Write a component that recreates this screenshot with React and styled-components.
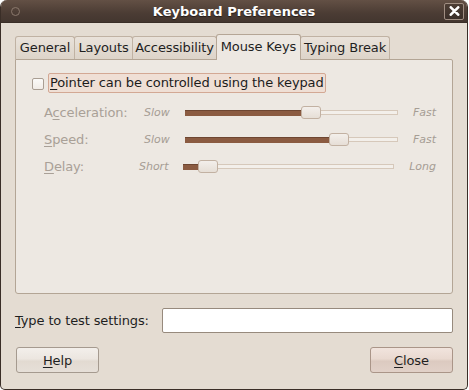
import React from "react"
import styled, { createGlobalStyle, css } from "styled-components"

const GlobalStyle = createGlobalStyle`
  html, body {
    margin: 0;
    padding: 0;
    background: #ffffff;
  }
  body {
    font-family: "DejaVu Sans", "Liberation Sans", sans-serif;
    font-size: 13px;
    letter-spacing: -0.12px;
    color: #1a1a1a;
  }
`

const Window = styled.div`
  width: 468px;
  height: 390px;
  box-sizing: border-box;
  display: flex;
  flex-direction: column;
  background: #e4dcd2;
  border: 1px solid #3a2e27;
  border-top: none;
  border-radius: 7px 7px 5px 5px;
  overflow: hidden;
`

const TitleBar = styled.div`
  height: 22px;
  flex: none;
  display: grid;
  grid-template-columns: 30px 1fr 30px;
  align-items: center;
  background: linear-gradient(#635045, #4b3c34 60%, #43362f);
  border-bottom: 1px solid #3a2e27;
`

const MenuDot = styled.div`
  width: 7px;
  height: 7px;
  margin-left: 10px;
  border-radius: 50%;
  border: 1px solid #8a786c;
`

const Title = styled.div`
  text-align: center;
  color: #ffffff;
  font-weight: bold;
  font-size: 13px;
  letter-spacing: 0;
  text-shadow: 0 1px 1px rgba(0, 0, 0, 0.55);
`

const CloseBox = styled.div`
  justify-self: end;
  margin-right: 3px;
  width: 20px;
  height: 17px;
  box-sizing: border-box;
  display: flex;
  align-items: center;
  justify-content: center;
  border: 1px solid #a08e82;
  border-radius: 2px;
  background: linear-gradient(#4d3e35, #3b2f29);
`

const Body = styled.div`
  flex: 1;
  display: flex;
  flex-direction: column;
  padding: 10px 14px 15px 14px;
`

const TabRow = styled.div`
  display: flex;
  align-items: flex-end;
  height: 26px;
  position: relative;
  z-index: 1;
`

const Tab = styled.div`
  box-sizing: border-box;
  width: ${(p) => p.$w}px;
  margin-left: -1px;
  &:first-child { margin-left: 0; }
  text-align: center;
  border: 1px solid #c0b2a3;
  border-bottom: none;
  border-radius: 3px 3px 0 0;
  height: 23px;
  line-height: 22px;
  background: linear-gradient(#e9e2da, #ddd4c9);
  color: #1f1f1f;
  ${(p) =>
    p.$active &&
    css`
      height: 26px;
      line-height: 23px;
      margin-bottom: -1px;
      border-color: #b5a696;
      background: #ede8e2;
      position: relative;
      z-index: 2;
    `}
`

const Panel = styled.div`
  height: 235px;
  box-sizing: border-box;
  border: 1px solid #b3a595;
  border-radius: 0 2px 3px 3px;
  background: #ede8e2;
  padding: 13px 16px 0 16px;
`

const CheckRow = styled.div`
  display: flex;
  align-items: center;
  height: 20px;
  gap: 4px;
`

const Checkbox = styled.div`
  width: 12px;
  height: 12px;
  box-sizing: border-box;
  border: 1px solid #a99e93;
  border-radius: 2px;
  background: linear-gradient(#fbfaf8, #f1ece7);
  margin-top: 1px;
`

const Prelight = styled.div`
  height: 20px;
  box-sizing: border-box;
  padding: 0 1px 0 1px;
  line-height: 18px;
  border: 1px solid #d3a894;
  border-radius: 2px;
  background: #efdfd5;
  color: #1c1c1c;
`

const Mn = styled.span`
  text-decoration: underline;
  text-underline-offset: 2px;
  text-decoration-thickness: 1px;
`

const Rows = styled.div`
  margin-top: 6px;
  margin-left: 12px;
`

const SliderRow = styled.div`
  display: flex;
  align-items: center;
  height: 27px;
`

const RowLabel = styled.div`
  width: 96px;
  color: #a9a097;
`

const EndWord = styled.div`
  font-size: 11px;
  font-style: italic;
  letter-spacing: 0;
  color: #a69d94;
  ${(p) =>
    p.$left
      ? css`
          width: 31px;
          text-align: right;
          margin-right: 15px;
        `
      : css`
          margin-left: 15px;
        `}
`

const Track = styled.div`
  position: relative;
  width: 215px;
  height: 13px;
`

const Trough = styled.div`
  position: absolute;
  left: 0;
  right: 0;
  top: 4px;
  height: 5px;
  box-sizing: border-box;
  border: 1px solid #d6c8ba;
  background: #f3efea;
`

const Fill = styled.div`
  position: absolute;
  left: 0;
  top: 4px;
  height: 6px;
  box-sizing: border-box;
  border-top: 1px solid #6e4631;
  background: #8b5b41;
`

const Knob = styled.div`
  position: absolute;
  top: 0;
  width: 20px;
  height: 13px;
  box-sizing: border-box;
  border: 1px solid #c2b1a2;
  border-radius: 3px;
  background: linear-gradient(#f3efeb, #e6ded6);
`

const TestRow = styled.div`
  display: flex;
  align-items: center;
  margin-top: 14px;
  height: 25px;
`

const TestLabel = styled.div`
  width: 147px;
  color: #1f1f1f;
`

const Entry = styled.div`
  flex: 1;
  height: 25px;
  box-sizing: border-box;
  border: 1px solid #978a7d;
  border-radius: 2px;
  background: #ffffff;
`

const ButtonRow = styled.div`
  display: flex;
  justify-content: space-between;
  margin-top: 14px;
  padding-left: 1px;
`

const Button = styled.div`
  width: 83px;
  height: 26px;
  box-sizing: border-box;
  display: flex;
  align-items: center;
  justify-content: center;
  border: 1px solid #a59a8f;
  border-radius: 3px;
  color: #1f1f1f;
  background: linear-gradient(#f3efeb, #ece6e0 45%, #e2dad1 55%, #e6dfd8);
  ${(p) =>
    p.$default &&
    css`
      border-color: #aa9588;
      background: linear-gradient(#f1e4dd, #e9d9d0 45%, #dccac0 55%, #e1d1c8);
    `}
`

const sliders = [
  { label: ["A", "c", "celeration:"], from: "Slow", to: "Fast", value: 0.595 },
  { label: ["", "S", "peed:"], from: "Slow", to: "Fast", value: 0.738 },
  { label: ["", "D", "elay:"], from: "Short", to: "Long", value: 0.077 },
]

const tabs = [
  { name: "General", w: 60 },
  { name: "Layouts", w: 59 },
  { name: "Accessibility", w: 85 },
  { name: "Mouse Keys", w: 85, active: true },
  { name: "Typing Break", w: 90 },
]

function Slider({ value }) {
  const left = Math.round(value * (215 - 20))
  return (
    <Track>
      <Trough />
      <Fill style={{ width: left + 2 }} />
      <Knob style={{ left }} />
    </Track>
  )
}

export default function App() {
  return (
    <>
      <GlobalStyle />
      <Window>
        <TitleBar>
          <MenuDot />
          <Title>Keyboard Preferences</Title>
          <CloseBox>
            <svg width="11" height="10" viewBox="0 0 11 10">
              <path d="M1.8 1.3 L9.2 8.7 M9.2 1.3 L1.8 8.7" stroke="#fff" strokeWidth="2.6" strokeLinecap="round" />
            </svg>
          </CloseBox>
        </TitleBar>
        <Body>
          <TabRow>
            {tabs.map((t) => (
              <Tab key={t.name} $w={t.w} $active={t.active}>
                {t.name}
              </Tab>
            ))}
          </TabRow>
          <Panel>
            <CheckRow>
              <Checkbox />
              <Prelight>
                <Mn>P</Mn>ointer can be controlled using the keypad
              </Prelight>
            </CheckRow>
            <Rows>
              {sliders.map((s) => (
                <SliderRow key={s.label.join("")}>
                  <RowLabel>
                    {s.label[0]}
                    <Mn>{s.label[1]}</Mn>
                    {s.label[2]}
                  </RowLabel>
                  <EndWord $left>{s.from}</EndWord>
                  <Slider value={s.value} />
                  <EndWord>{s.to}</EndWord>
                </SliderRow>
              ))}
            </Rows>
          </Panel>
          <TestRow>
            <TestLabel>
              <Mn>T</Mn>ype to test settings:
            </TestLabel>
            <Entry />
          </TestRow>
          <ButtonRow>
            <Button>
              <Mn>H</Mn>elp
            </Button>
            <Button $default>
              <Mn>C</Mn>lose
            </Button>
          </ButtonRow>
        </Body>
      </Window>
    </>
  )
}
